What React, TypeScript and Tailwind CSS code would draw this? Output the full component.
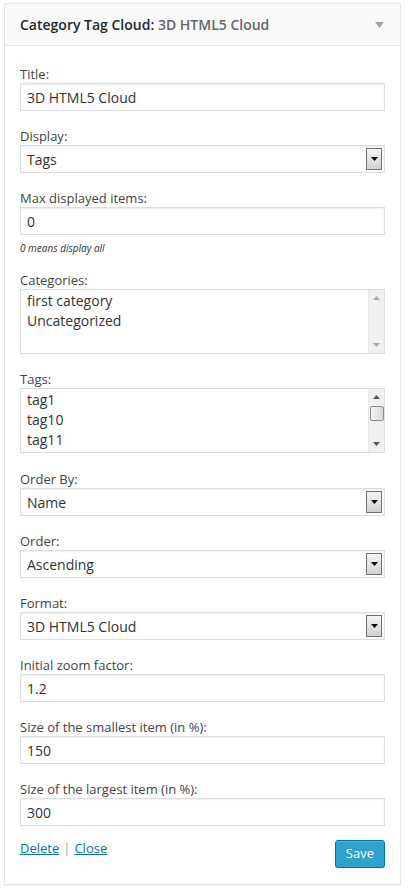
import React from "react";

const font = { fontFamily: '"Open Sans", "Noto Sans", sans-serif' };

const Label = ({ children }: { children: React.ReactNode }) => (
  <div className="text-[13px] leading-[18px] text-[#444]">{children}</div>
);

const TextInput = ({ value }: { value: string }) => (
  <div className="h-[28px] border border-[#ddd] bg-white shadow-[inset_0_1px_2px_rgba(0,0,0,0.07)] px-[6px] flex items-center text-[14px] text-[#333]">
    {value}
  </div>
);

const SelectBox = ({ value }: { value: string }) => (
  <div className="h-[28px] border border-[#ddd] bg-white shadow-[inset_0_1px_2px_rgba(0,0,0,0.07)] pl-[6px] pr-[2px] flex items-center justify-between text-[14px] text-[#333]">
    <span>{value}</span>
    <div className="w-[16px] h-[22px] border border-[#707070] bg-gradient-to-b from-[#f4f4f4] to-[#d2d2d2] flex items-center justify-center">
      <svg width="7" height="4" viewBox="0 0 7 4">
        <path d="M0 0h7L3.5 4z" fill="#000" />
      </svg>
    </div>
  </div>
);

const Arrow = ({ up, color }: { up?: boolean; color: string }) => (
  <svg width="7" height="4" viewBox="0 0 7 4">
    <path d={up ? "M3.5 0L7 4H0z" : "M0 0h7L3.5 4z"} fill={color} />
  </svg>
);

const ListBox = ({ items, thumb }: { items: string[]; thumb?: boolean }) => (
  <div className="h-[65px] border border-[#ddd] bg-white flex text-[14px] text-[#333] overflow-hidden">
    <div className="flex-1 pl-[6px] pt-[1px] leading-[20px]">
      {items.map(i => (
        <div key={i}>{i}</div>
      ))}
    </div>
    <div className="w-[16px] bg-[#f0f0f0] border-l border-[#e8e8e8] flex flex-col items-center justify-between py-[6px]">
      <Arrow up color={thumb ? "#555" : "#aaa"} />
      {thumb && (
        <div className="w-[14px] h-[15px] -mt-[14px] border border-[#8a8a8a] rounded-[2px] bg-gradient-to-r from-[#f6f6f6] to-[#d8d8d8]" />
      )}
      <Arrow color={thumb ? "#555" : "#aaa"} />
    </div>
  </div>
);

export default function App() {
  return (
    <div className="bg-white w-[409px] h-[893px] pt-[3px] pl-[4px]" style={font}>
      <div className="w-[397px] border border-[#e5e5e5] bg-white shadow-[0_1px_1px_rgba(0,0,0,0.04)]">
        <div className="h-[42px] bg-[#fafafa] border-b border-[#e5e5e5] flex items-center justify-between pl-[15px] pr-[16px]">
          <div className="text-[14px] font-semibold text-[#23282d]">
            Category Tag Cloud: <span className="text-[#666]">3D HTML5 Cloud</span>
          </div>
          <svg width="9" height="6" viewBox="0 0 9 6">
            <path d="M0 0h9L4.5 6z" fill="#a0a5aa" />
          </svg>
        </div>

        <div className="px-[15px] pt-[19px] pb-[16px]">
          <div className="flex flex-col gap-[16px]">
            <div>
              <Label>Title:</Label>
              <TextInput value="3D HTML5 Cloud" />
            </div>
            <div>
              <Label>Display:</Label>
              <SelectBox value="Tags" />
            </div>
            <div>
              <Label>Max displayed items:</Label>
              <TextInput value="0" />
              <div className="mt-[6px] text-[10px] leading-[14px] italic text-[#333]">0 means display all</div>
            </div>
            <div>
              <Label>Categories:</Label>
              <ListBox items={["first category", "Uncategorized"]} />
            </div>
            <div className="mb-[1px]">
              <Label>Tags:</Label>
              <ListBox items={["tag1", "tag10", "tag11"]} thumb />
            </div>
            <div>
              <Label>Order By:</Label>
              <SelectBox value="Name" />
            </div>
            <div>
              <Label>Order:</Label>
              <SelectBox value="Ascending" />
            </div>
            <div>
              <Label>Format:</Label>
              <SelectBox value="3D HTML5 Cloud" />
            </div>
            <div>
              <Label>Initial zoom factor:</Label>
              <TextInput value="1.2" />
            </div>
            <div>
              <Label>Size of the smallest item (in %):</Label>
              <TextInput value="150" />
            </div>
            <div>
              <Label>Size of the largest item (in %):</Label>
              <TextInput value="300" />
            </div>
          </div>

          <div className="mt-[13px] flex items-start justify-between">
            <div className="text-[13px] leading-[18px] text-[#0073aa]">
              <a className="underline" href="#">Delete</a>
              <span className="text-[#a0a5aa] mx-[4px]">|</span>
              <a className="underline" href="#">Close</a>
            </div>
            <button className="h-[28px] px-[10px] mt-px rounded-[3px] border border-[#0074a2] bg-[#2ea2cc] text-white text-[13px] shadow-[inset_0_1px_0_rgba(120,200,230,0.5)]">
              Save
            </button>
          </div>
        </div>
      </div>
    </div>
  );
}
